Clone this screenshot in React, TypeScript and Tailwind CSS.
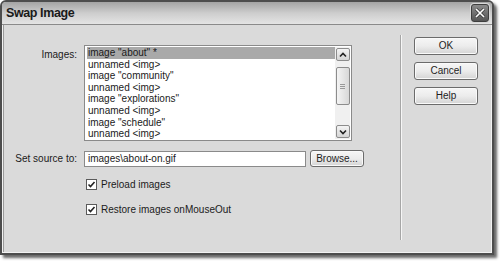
import React from 'react';

const items = [
  'image "about" *',
  'unnamed <img>',
  'image "community"',
  'unnamed <img>',
  'image "explorations"',
  'unnamed <img>',
  'image "schedule"',
  'unnamed <img>',
];

const btn =
  'rounded-[3px] border border-[#6b6b6b] bg-gradient-to-b from-[#f6f6f6] via-[#ececec] to-[#d4d4d4] text-[#1e1e1e] text-[10px] leading-none flex items-center justify-center shadow-[inset_0_0_0_1px_#fafafa]';

const CheckBox = () => (
  <div className="w-[11px] h-[11px] border border-[#5a5a5a] bg-white flex items-center justify-center">
    <svg width="9" height="9" viewBox="0 0 9 9">
      <path d="M1.5 4.5 L3.5 6.5 L7.5 2" stroke="#222" strokeWidth="1.6" fill="none" />
    </svg>
  </div>
);

const ScrollBtn = ({ up }: { up?: boolean }) => (
  <div className="w-[14px] h-[13px] rounded-[2px] border border-[#8c8c8c] bg-gradient-to-b from-[#f4f4f4] to-[#d6d6d6] flex items-center justify-center">
    <svg width="8" height="6" viewBox="0 0 8 6">
      <path d={up ? 'M1 4.5 L4 1.5 L7 4.5' : 'M1 1.5 L4 4.5 L7 1.5'} stroke="#222" strokeWidth="1.6" fill="none" />
    </svg>
  </div>
);

const App: React.FC = () => {
  return (
    <div className="w-[500px] h-[262px] bg-white" style={{ fontFamily: '"Liberation Sans", Arial, sans-serif' }}>
      <div className="w-[494px] h-[255px] flex flex-col border-2 border-[#4d4d4d] rounded-t-[6px] bg-[#dadada] shadow-[3px_3px_3px_rgba(0,0,0,0.6)]">
        {/* title bar */}
        <div className="h-[23px] flex items-center justify-between pl-[4px] pr-[3px] rounded-t-[4px] border-b border-[#8a8a8a] bg-gradient-to-b from-[#a4a4a4] via-[#cdcdcd] to-[#e4e4e4]">
          <span className="text-[12.5px] font-bold tracking-[-0.4px] text-[#1a1a1a] mt-[1px]">Swap Image</span>
          <div className="w-[18px] h-[18px] rounded-[3px] border border-[#3e3e3e] bg-gradient-to-b from-[#8c8c8c] to-[#555] shadow-[0_0_0_1px_#d8d8d8] flex items-center justify-center">
            <svg width="12" height="12" viewBox="0 0 12 12">
              <path d="M2 2 L10 10 M10 2 L2 10" stroke="#333" strokeWidth="3" />
              <path d="M2 2 L10 10 M10 2 L2 10" stroke="#fff" strokeWidth="1.7" />
            </svg>
          </div>
        </div>

        {/* body */}
        <div className="flex-1 flex border-l border-r border-b border-[#f2f2f2] shadow-[inset_1px_0_0_#9a9a9a]">
          <div className="w-[397px] pt-[20px] text-[10px] text-[#1a1a1a]">
            <div className="flex gap-[7px]">
              <div className="w-[74px] text-right pt-[4px] leading-[12px]">Images:</div>
              <div className="w-[268px] h-[96px] border border-[#8a8a8a] bg-white flex p-[1px]">
                <div className="flex-1 leading-[11.6px] pl-[1px]">
                  {items.map((t, i) => (
                    <div key={i} className={`pl-[1px] ${i === 0 ? 'bg-[#a9a9a9]' : ''}`}>{t}</div>
                  ))}
                </div>
                <div className="w-[15px] bg-[#f0f0f0] flex flex-col items-center justify-between py-[1px]">
                  <ScrollBtn up />
                  <div className="w-[14px] h-[38px] -mt-[14px] rounded-[2px] border border-[#8c8c8c] bg-gradient-to-r from-[#f4f4f4] to-[#d8d8d8] flex flex-col items-center justify-center gap-[1px]">
                    <div className="w-[5px] h-[1px] bg-[#999]" />
                    <div className="w-[5px] h-[1px] bg-[#999]" />
                    <div className="w-[5px] h-[1px] bg-[#999]" />
                  </div>
                  <ScrollBtn />
                </div>
              </div>
            </div>

            <div className="flex items-center gap-[7px] mt-[9px]">
              <div className="w-[74px] text-right">Set source to:</div>
              <div className="w-[222px] h-[16px] border border-[#8a8a8a] bg-white pl-[3px] flex items-center">images\about-on.gif</div>
              <div className={`${btn} w-[54px] h-[17px] -ml-[3px]`}>Browse...</div>
            </div>

            <div className="flex items-center gap-[4px] ml-[83px] mt-[12px] leading-[11px]">
              <CheckBox />
              <span>Preload images</span>
            </div>
            <div className="flex items-center gap-[4px] ml-[83px] mt-[14px] leading-[11px]">
              <CheckBox />
              <span>Restore images onMouseOut</span>
            </div>
          </div>

          <div className="mt-[10px] h-[205px] w-[2px] border-l border-[#a6a6a6] border-r border-r-[#f6f6f6]" />

          <div className="ml-[12px] pt-[12px] flex flex-col gap-[7px]">
            <div className={`${btn} w-[64px] h-[18px]`}>OK</div>
            <div className={`${btn} w-[64px] h-[18px]`}>Cancel</div>
            <div className={`${btn} w-[64px] h-[18px]`}>Help</div>
          </div>
        </div>
      </div>
    </div>
  );
};

export default App;
